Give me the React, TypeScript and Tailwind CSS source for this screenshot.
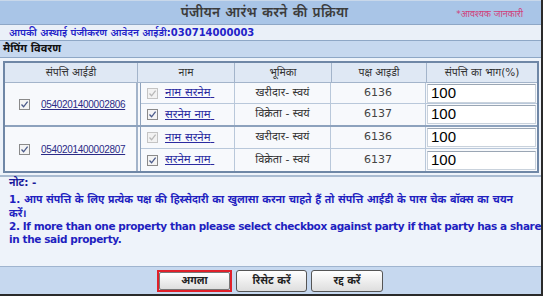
import React from "react";

const dev = "font-['DejaVu_Sans','Noto_Sans',sans-serif]";

function Check({ disabled = false }: { disabled?: boolean }) {
  return (
    <span
      className={`inline-flex items-center justify-center w-[11px] h-[11px] border ${
        disabled ? "border-[#c4c4c4] bg-[#f2f2f2]" : "border-[#8a8a8a] bg-[#f4f4f4]"
      }`}
    >
      <svg width="9" height="9" viewBox="0 0 9 9">
        <path
          d="M1.5 4.5 L3.6 6.8 L7.6 1.6"
          fill="none"
          stroke={disabled ? "#b8b8b8" : "#4a5a8a"}
          strokeWidth="1.3"
        />
      </svg>
    </span>
  );
}

function PartyRow({
  disabled,
  name,
  role,
  id,
  last,
}: {
  disabled: boolean;
  name: string;
  role: string;
  id: string;
  last?: boolean;
}) {
  return (
    <div className={`flex h-[22px] ${last ? "" : "border-b border-[#b9c8da]"}`}>
      <div className="w-[94px] flex items-center gap-[7px] pl-[6px] border-r border-[#b9c8da]">
        <Check disabled={disabled} />
        <span className="text-[11.5px] text-[#2a2aa0] underline decoration-[#2a2aa0] whitespace-nowrap">{name}&nbsp;</span>
      </div>
      <div className="w-[96px] flex items-center justify-center text-[11px] text-[#333] border-r border-[#b9c8da] whitespace-nowrap">
        {role}
      </div>
      <div className="w-[95px] flex items-center justify-center text-[11px] text-[#444] border-r border-[#b9c8da]">
        {id}
      </div>
      <div className="flex-1 flex items-center pl-[1px] pr-[1px]">
        <div className="w-full h-[19px] bg-white border border-[#c9d2dc] border-t-[#9aa6b4] flex items-center pl-[3px] text-[15px] text-black font-['Liberation_Sans',sans-serif]">
          100
        </div>
      </div>
    </div>
  );
}

function PropertyRow({ pid, last }: { pid: string; last?: boolean }) {
  return (
    <div className={`flex h-[44px] ${last ? "" : "border-b-2 border-[#8da2bd]"}`}>
      <div className="w-[133px] flex items-center pl-[14px] gap-[11px] border-r-2 border-[#a3b4ca] bg-[#f7f9fc]">
        <Check />
        <span className="text-[10px] text-[#2b2b86] underline font-['Liberation_Sans',sans-serif] tracking-[-0.3px] whitespace-nowrap">
          {pid}
        </span>
      </div>
      <div className="flex-1 pl-[2px] bg-[#f7f9fc]">
        <div className="h-full border-l border-[#8da2bd] bg-[#f7f9fc] flex flex-col">
          <PartyRow disabled name="नाम सरनेम" role="खरीदार- स्वयं" id="6136" />
          <PartyRow disabled={false} name="सरनेम नाम" role="विक्रेता - स्वयं" id="6137" last />
        </div>
      </div>
    </div>
  );
}

export default function App() {
  return (
    <div className={`w-[549px] h-[300px] bg-white ${dev}`}>
      <div className="w-[543px] h-[296px] border-r-2 border-b-2 border-[#2a2a2a] flex flex-col bg-[#eef3fa]">
        {/* title */}
        <div className="h-[25px] relative flex items-center justify-center bg-[#a9c5e7] border-b border-[#8ea7c6] border-t border-t-[#c9d8ea]">
          <span className="text-[13.5px] text-[#3c3c3c] font-semibold pr-[12px] tracking-[0.3px]">पंजीयन आरंभ करने की प्रक्रिया</span>
          <span className="absolute right-[18px] top-[7px] text-[9px] text-[#d0407a]">*आवश्यक जानकारी</span>
        </div>
        <div className="h-[16px] flex items-center pl-[9px] bg-[#eaf0f8] border-b border-[#8ea7c6]">
          <span className="text-[10px] font-semibold text-[#2323c8] whitespace-nowrap">
            आपकी अस्थाई पंजीकरण आवेदन आईडी:030714000003
          </span>
        </div>
        <div className="h-[17px] flex items-center pl-[3px] bg-[#c6d8ef] border-b border-[#8ea7c6]">
          <span className="text-[11px] font-bold text-[#111]">मैपिंग विवरण</span>
        </div>
        {/* table */}
        <div className="pt-[3px] pl-[3px] pr-[2px] pb-[2px] bg-[#eef3fa] border-b-2 border-[#a9bbd1]">
          <div className="border-2 border-[#6f87a6]">
            <div className="flex h-[20px] bg-[#dfe8f4] border-b border-[#a3b4ca] text-[10.5px] text-[#333]">
              <div className="w-[133px] flex items-center justify-center border-r border-[#a3b4ca]">संपत्ति आईडी</div>
              <div className="w-[97px] flex items-center justify-center border-r border-[#a3b4ca]">नाम</div>
              <div className="w-[97px] flex items-center justify-center border-r border-[#a3b4ca]">भूमिका</div>
              <div className="w-[95px] flex items-center justify-center border-r border-[#a3b4ca]">पक्ष आइडी</div>
              <div className="flex-1 flex items-center justify-center">संपत्ति का भाग(%)</div>
            </div>
            <PropertyRow pid="0540201400002806" />
            <PropertyRow pid="0540201400002807" last />
          </div>
        </div>
        {/* notes */}
        <div className="pl-[9px] text-[#1f1fc0] bg-[#eef3fa]">
          <div className="text-[10.5px] font-bold text-[#1a1a9a] h-[12px] flex items-center">नोट: -</div>
          <div className="text-[10.5px] font-bold leading-[14px] mt-[3px] whitespace-nowrap">
            1. आप संपत्ति के लिए प्रत्येक पक्ष की हिस्सेदारी का खुलासा करना चाहते हैं तो संपत्ति आईडी के पास चेक बॉक्स का चयन
            <br />
            करें।
          </div>
          <div className="text-[10.5px] font-bold leading-[13px] tracking-[-0.4px] whitespace-nowrap">
            2. If more than one property than please select checkbox against party if that party has a share
            <br />
            in the said property.
          </div>
        </div>
        <div className="flex-1 bg-[#eef3fa] border-b border-[#9fb4cf]" />
        {/* buttons */}
        <div className="h-[27px] bg-[#c6d8ef] flex items-center pl-[157px] gap-[4px]">
          <button className="w-[75px] h-[22px] border-2 border-[#e0202a] p-0 bg-transparent">
            <span className="w-full h-full flex items-center justify-center text-[10.5px] font-bold text-[#222] bg-gradient-to-b from-[#ffffff] to-[#dedede] border border-[#777] rounded-[2px]">
              अगला
            </span>
          </button>
          <button className="w-[71px] h-[22px] flex items-center justify-center text-[10.5px] font-bold text-[#222] bg-gradient-to-b from-[#ffffff] to-[#dedede] border border-[#555] rounded-[3px]">
            रिसेट करें
          </button>
          <button className="w-[72px] h-[22px] flex items-center justify-center text-[10.5px] font-bold text-[#222] bg-gradient-to-b from-[#ffffff] to-[#dedede] border border-[#555] rounded-[3px]">
            रद्द करें
          </button>
        </div>
      </div>
    </div>
  );
}
